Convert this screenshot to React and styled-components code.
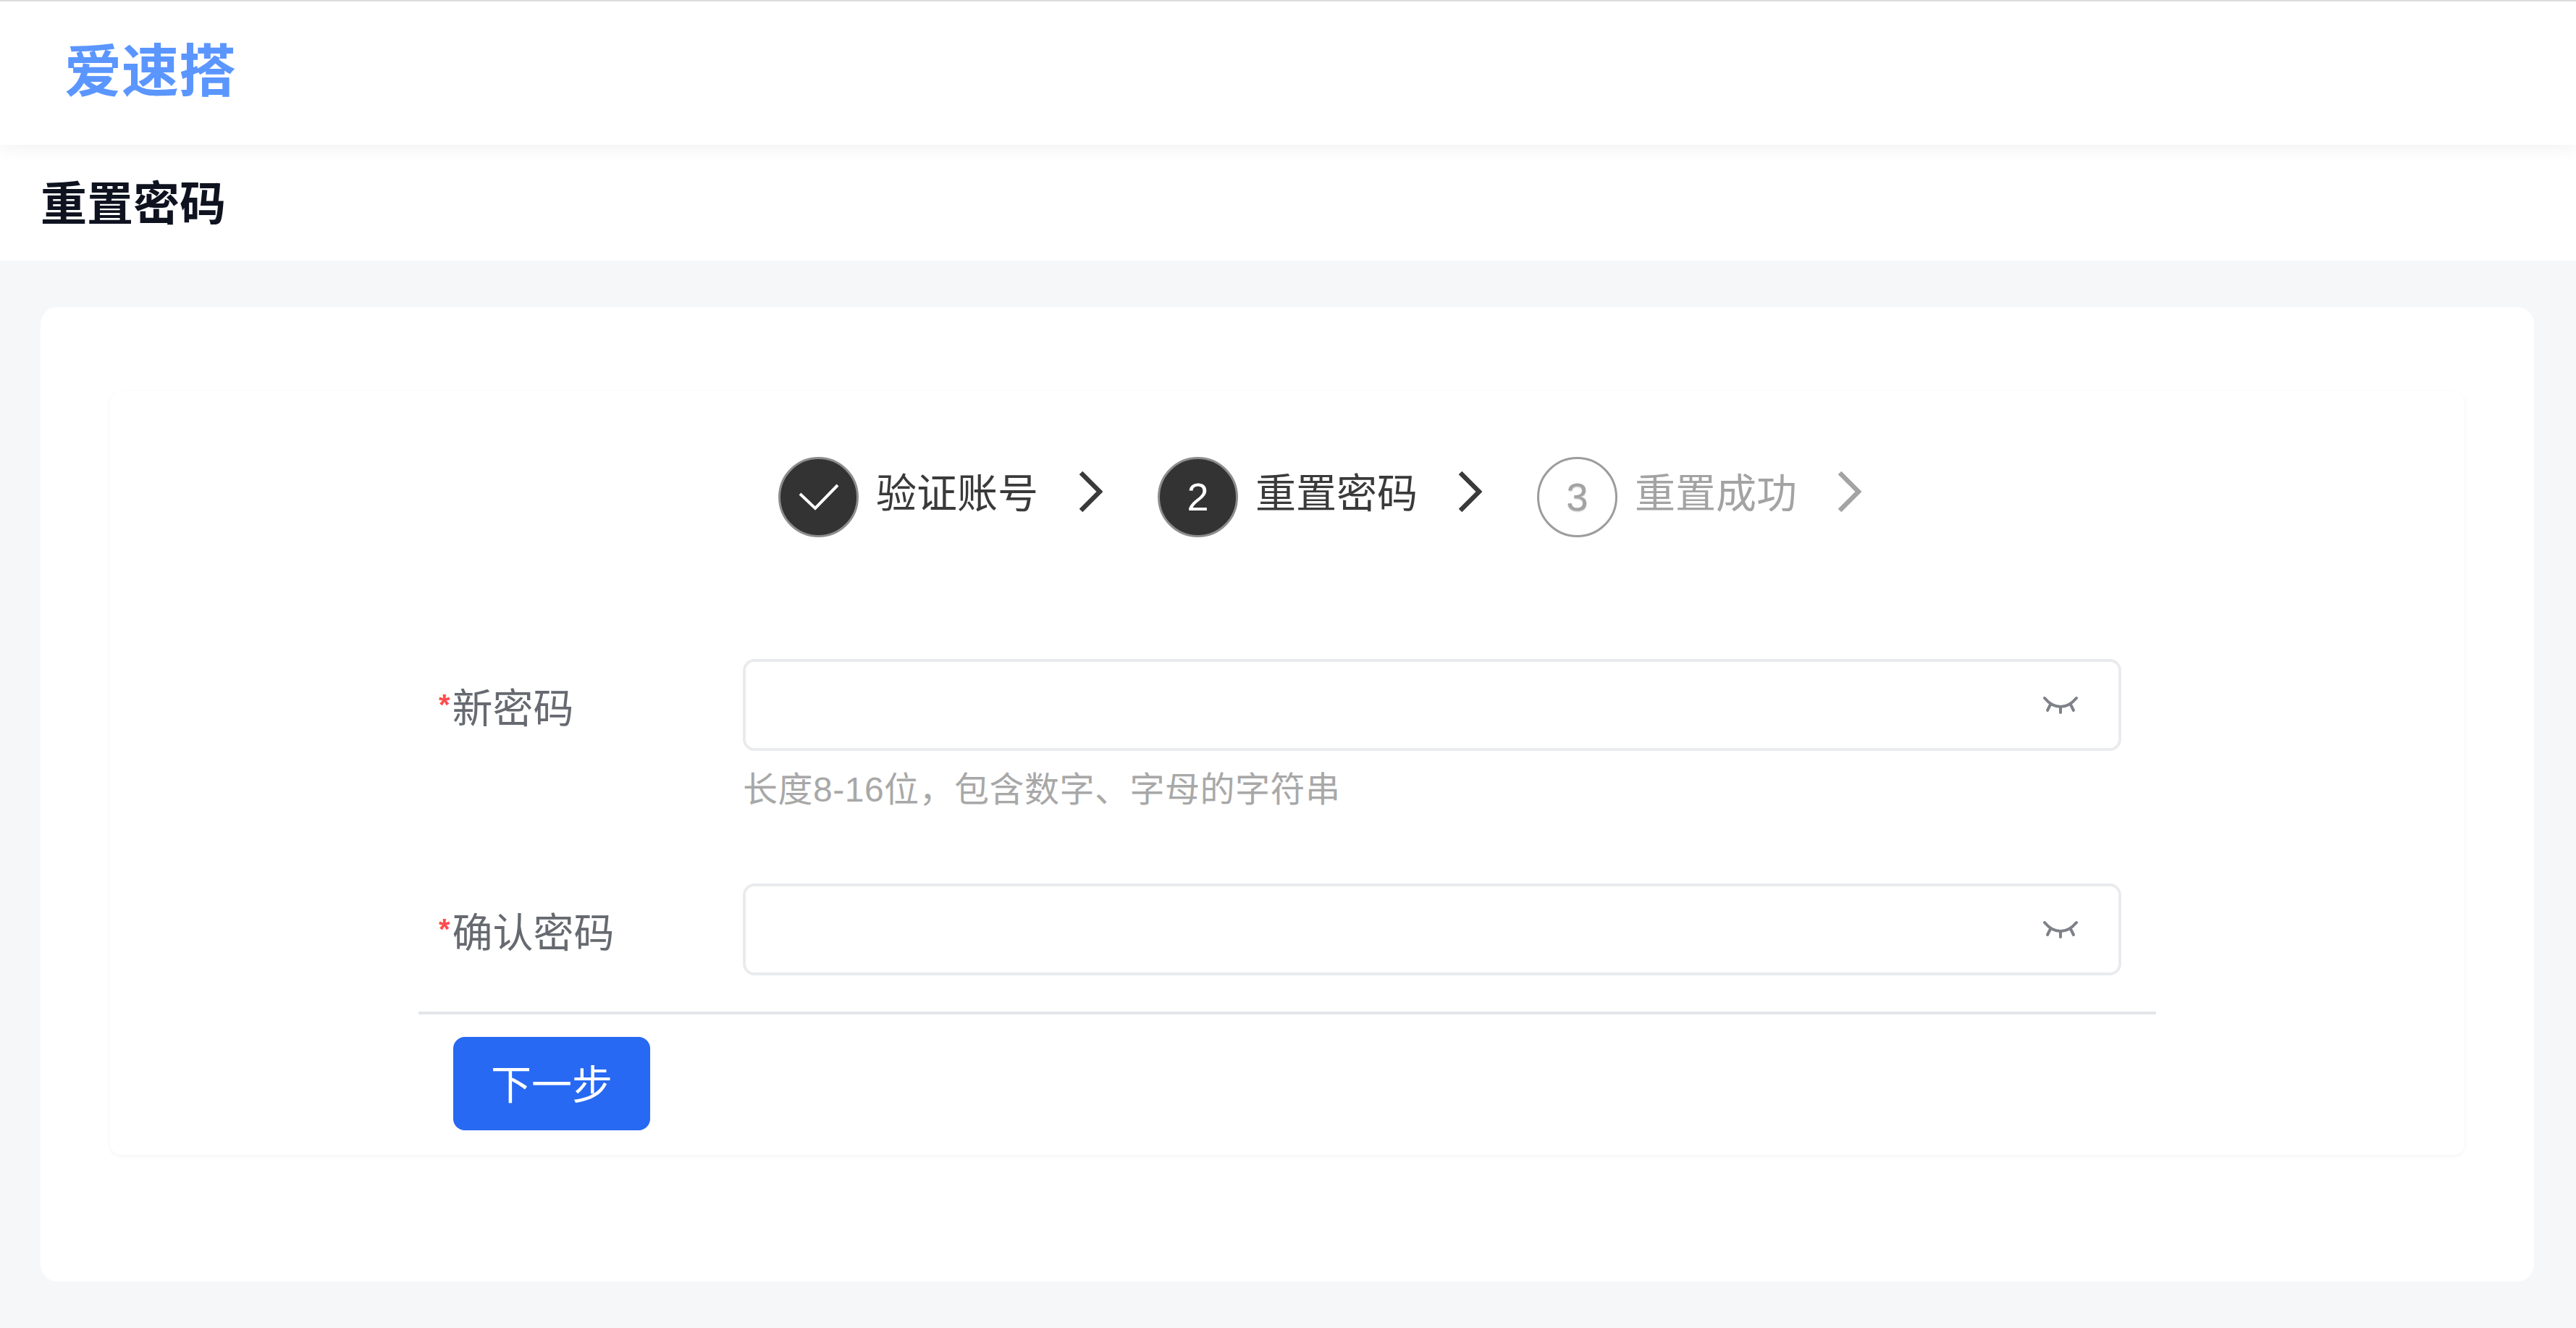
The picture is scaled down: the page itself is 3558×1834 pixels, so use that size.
import React from 'react';
import styled, { createGlobalStyle } from 'styled-components';

const GlobalStyle = createGlobalStyle`
html, body {
  margin: 0;
  padding: 0;
  background: #f6f7f9;
}
body {
  font-family: "Liberation Sans", "Noto Sans CJK SC", sans-serif;
}
* {
  box-sizing: border-box;
}
`;

const Page = styled.div`
width: 3558px;
height: 1834px;
overflow: hidden;
display: flex;
flex-direction: column;
background: #f6f7f9;
`;

const Header = styled.header`
position: relative;
z-index: 1;
height: 200px;
flex: none;
display: flex;
align-items: center;
padding: 0 0 4px 89px;
background: #fff;
border-top: 2px solid #dcdcdc;
box-shadow: 0 4px 24px rgba(0, 0, 0, 0.06);
`;

const Logo = styled.div`
font-size: 79px;
font-weight: 700;
line-height: 1;
color: #5b96ff;
`;

const TitleBand = styled.div`
height: 160px;
flex: none;
display: flex;
align-items: center;
padding: 4px 0 0 56px;
background: #fff;
`;

const Title = styled.h1`
margin: 0;
font-size: 64px;
font-weight: 700;
line-height: 1;
color: #0f1320;
`;

const Main = styled.main`
flex: 1;
padding: 64px 58px 64px 56px;
`;

const Card = styled.section`
height: 1346px;
padding: 116px 96px 0;
background: #fff;
border-radius: 24px;
`;

const Panel = styled.div`
height: 1055px;
padding: 90px 0 0 426px;
background: #fff;
border-radius: 16px;
box-shadow: 0 2px 6px rgba(20, 30, 50, 0.05);
`;

const Steps = styled.div`
display: flex;
align-items: center;
height: 112px;
margin: 0 0 168px 497px;
`;

const Step = styled.div`
display: flex;
align-items: center;
width: 524px;
flex: none;
color: ${(p) => (p.$todo ? '#a3a3a3' : '#3a3a3a')};
`;

const StepCircle = styled.div`
width: 111px;
height: 111px;
flex: none;
display: flex;
align-items: center;
justify-content: center;
border-radius: 50%;
font-size: 54px;
color: ${(p) => (p.$todo ? '#a3a3a3' : '#fff')};
background: ${(p) => (p.$todo ? '#fff' : '#333')};
border: 3px solid ${(p) => (p.$todo ? '#9c9c9c' : '#8d8d8d')};
text-shadow: ${(p) => (p.$todo ? '0 1px 2px rgba(0, 0, 0, 0.25)' : 'none')};
`;

const StepLabel = styled.span`
width: 224px;
margin: 0 0 8px 24px;
flex: none;
font-size: 56px;
line-height: 1;
white-space: nowrap;
`;

const Chevron = styled.svg`
width: 34px;
height: 58px;
margin: 0 0 14px 55px;
flex: none;
`;

const CheckMark = styled.svg`
width: 56px;
height: 37px;
flex: none;
`;

const Form = styled.form`
width: 2400px;
margin: 0;
`;

const Field = styled.div`
display: grid;
grid-template-columns: 420px 1904px;
padding-left: 28px;
margin-bottom: ${(p) => p.$gap}px;
`;

const FieldLabel = styled.label`
height: 127px;
display: flex;
align-items: center;
font-size: 56px;
color: #666a70;
`;

const Star = styled.span`
font-size: 40px;
font-weight: 700;
color: #ff4d4f;
margin-right: 3px;
`;

const InputBox = styled.div`
height: 127px;
display: flex;
align-items: center;
justify-content: flex-end;
padding: 0 56px 0 0;
background: #fff;
border: 4px solid #e9ebee;
border-radius: 16px;
`;

const EyeIcon = styled.svg`
width: 48px;
height: 26px;
flex: none;
`;

const Hint = styled.p`
grid-column: 2;
margin: 28px 0 0;
font-size: 48px;
letter-spacing: 0.5px;
line-height: 52px;
color: #a8a8a8;
`;

const Divider = styled.hr`
margin: 0 0 31px;
height: 4px;
border: 0;
background: #e3e5e9;
`;

const NextButton = styled.button`
display: block;
width: 272px;
height: 129px;
margin-left: 48px;
padding: 0 0 6px;
border: 0;
border-radius: 16px;
font-family: inherit;
font-size: 56px;
color: #fff;
background: #2769f2;
`;

function ChevronMark() {
    return (
        <Chevron viewBox="0 0 34 58">
            <polyline points="4,3 30,29 4,55" fill="none" stroke="currentColor" strokeWidth="6.5" />
        </Chevron>
    );
}

function Eye() {
    return (
        <EyeIcon viewBox="0 0 48 26">
            <g fill="none" stroke="#7e8288" strokeWidth="4" strokeLinecap="round">
                <path d="M2 3Q12 15 24 15T46 3" />
                <path d="M10 12L6 20" />
                <path d="M24 15V23" />
                <path d="M38 12L42 20" />
            </g>
        </EyeIcon>
    );
}

export default function App() {
    return (
        <Page>
            <GlobalStyle />
            <Header>
                <Logo>爱速搭</Logo>
            </Header>
            <TitleBand>
                <Title>重置密码</Title>
            </TitleBand>
            <Main>
                <Card>
                    <Panel>
                        <Steps>
                            <Step>
                                <StepCircle>
                                    <CheckMark viewBox="0 0 56 37">
                                        <polyline points="2,14 23,34 54,2" fill="none" stroke="#fff" strokeWidth="4" />
                                    </CheckMark>
                                </StepCircle>
                                <StepLabel>验证账号</StepLabel>
                                <ChevronMark />
                            </Step>
                            <Step>
                                <StepCircle>2</StepCircle>
                                <StepLabel>重置密码</StepLabel>
                                <ChevronMark />
                            </Step>
                            <Step $todo>
                                <StepCircle $todo>3</StepCircle>
                                <StepLabel>重置成功</StepLabel>
                                <ChevronMark />
                            </Step>
                        </Steps>
                        <Form>
                            <Field $gap={103}>
                                <FieldLabel><Star>*</Star>新密码</FieldLabel>
                                <InputBox><Eye /></InputBox>
                                <Hint>长度8-16位，包含数字、字母的字符串</Hint>
                            </Field>
                            <Field $gap={50}>
                                <FieldLabel><Star>*</Star>确认密码</FieldLabel>
                                <InputBox><Eye /></InputBox>
                            </Field>
                            <Divider />
                            <NextButton type="button">下一步</NextButton>
                        </Form>
                    </Panel>
                </Card>
            </Main>
        </Page>
    );
}
